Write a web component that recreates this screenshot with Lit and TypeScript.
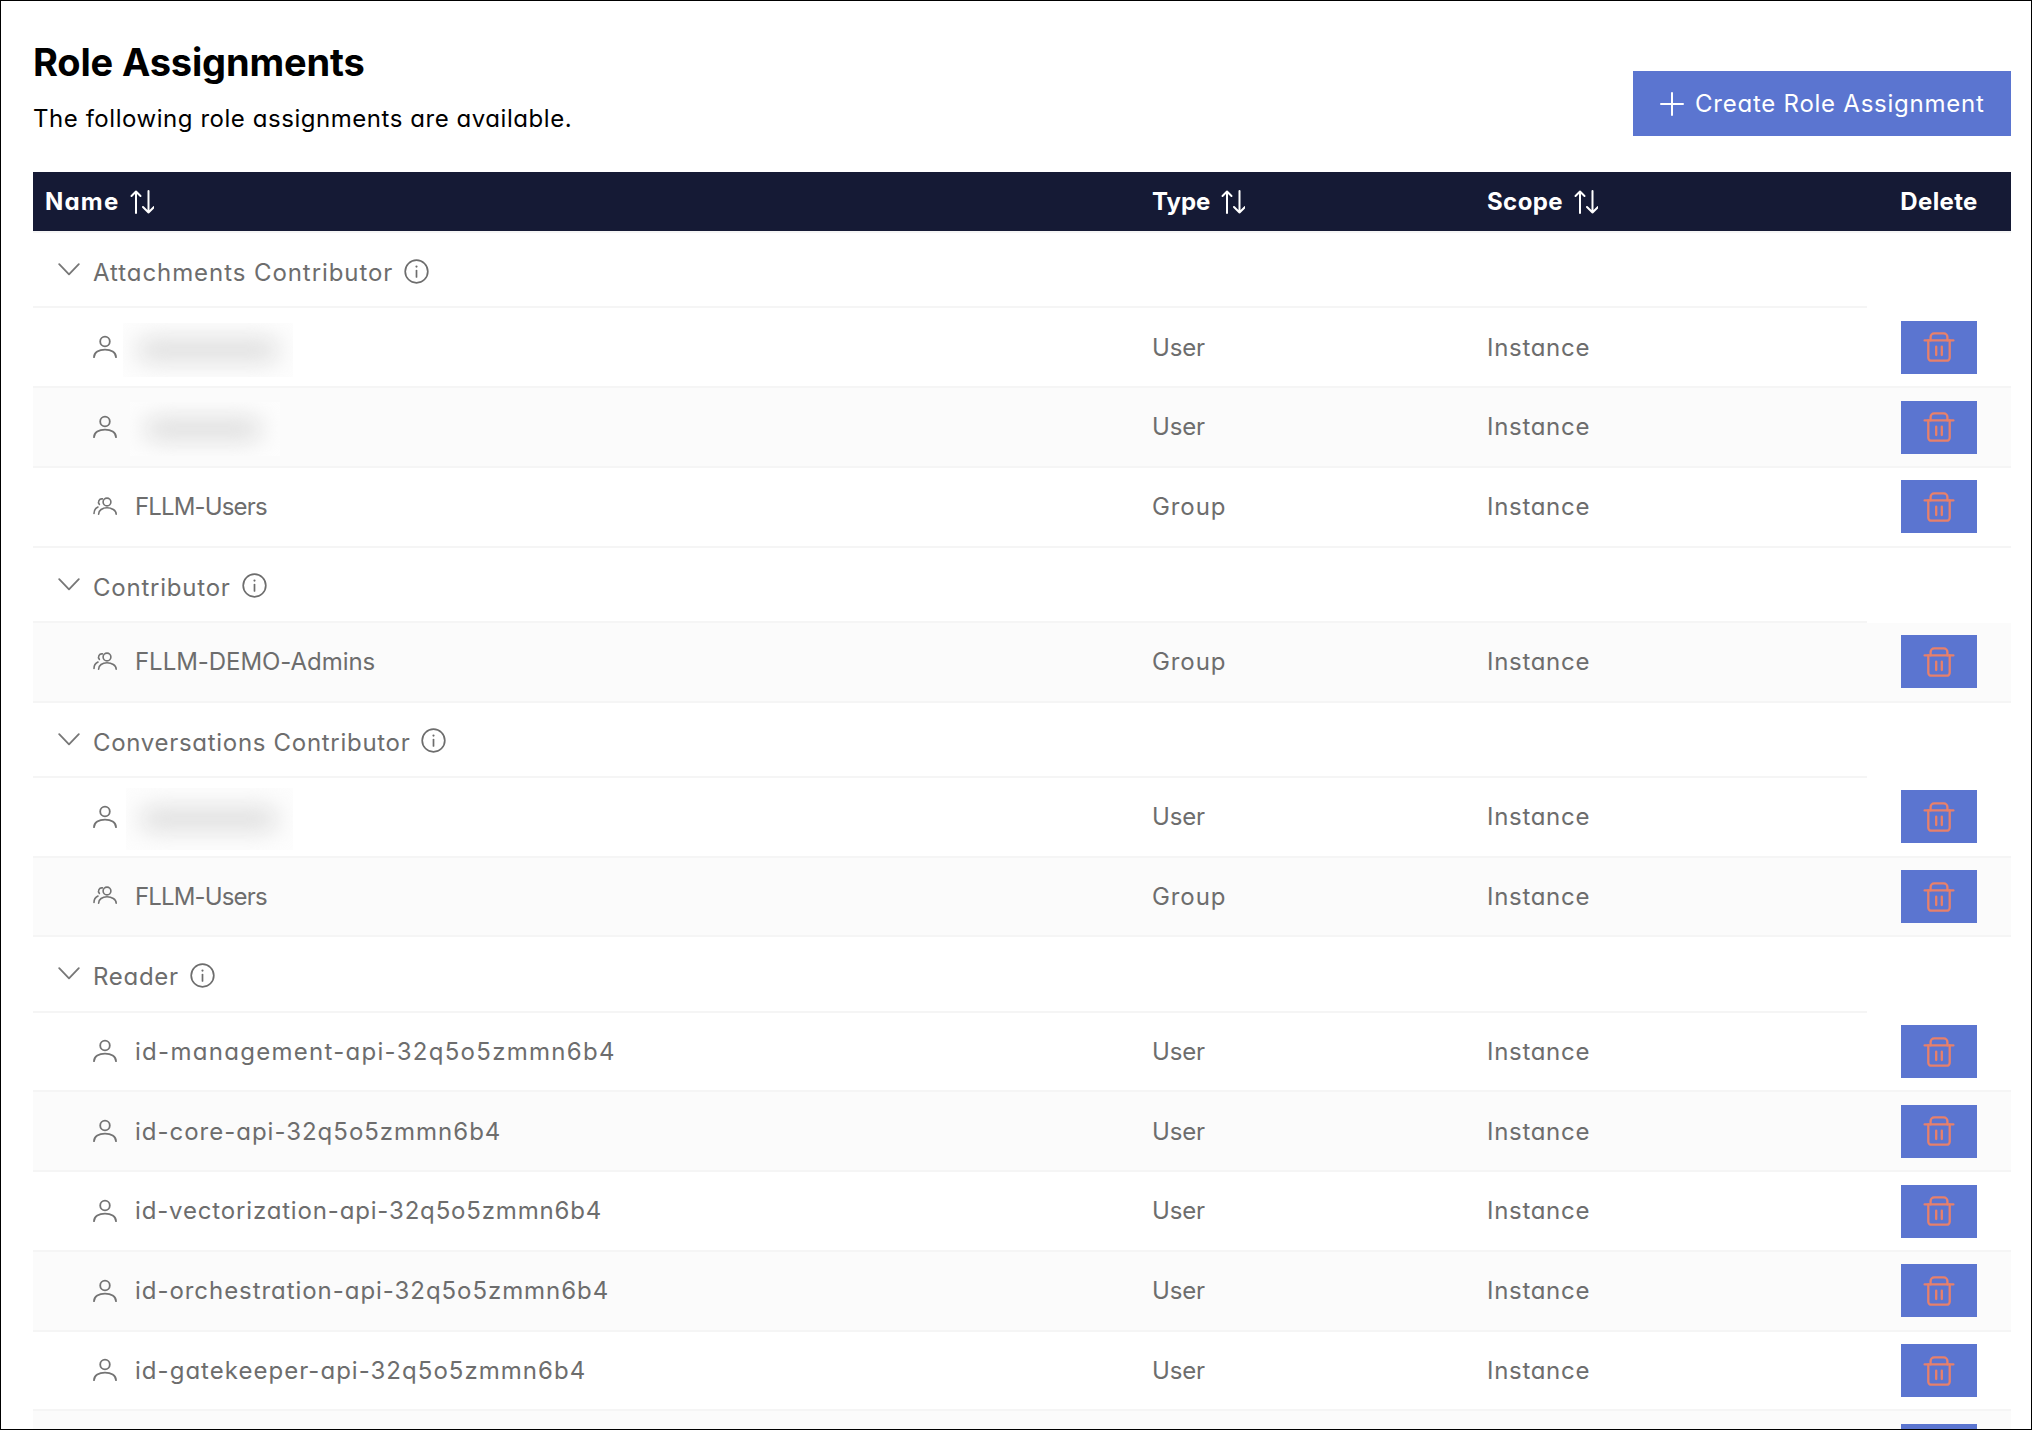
import { LitElement, html, css, svg } from "lit";
import { customElement } from "lit/decorators.js";
import { styleMap } from "lit/directives/style-map.js";

type Row = { name?: string; ls?: number; redact?: string; kind?: "user" | "group"; type?: string };
type Group = { title: string; ls: number; rows: Row[] };

const U = (name: string, ls: number): Row => ({ name, ls, kind: "user", type: "User" });
const G = (name: string, ls: number): Row => ({ name, ls, kind: "group", type: "Group" });
const R = (redact: string): Row => ({ redact, kind: "user", type: "User" });

const GROUPS: Group[] = [
  { title: "Attachments Contributor", ls: 0.93, rows: [R("r1"), R("r2"), G("FLLM-Users", -0.85)] },
  { title: "Contributor", ls: 0.78, rows: [G("FLLM-DEMO-Admins", -0.05)] },
  { title: "Conversations Contributor", ls: 0.7, rows: [R("r3"), G("FLLM-Users", -0.85)] },
  {
    title: "Reader",
    ls: 0.7,
    rows: [
      U("id-management-api-32q5o5zmmn6b4", 1.29),
      U("id-core-api-32q5o5zmmn6b4", 0.99),
      U("id-vectorization-api-32q5o5zmmn6b4", 0.84),
      U("id-orchestration-api-32q5o5zmmn6b4", 0.95),
      U("id-gatekeeper-api-32q5o5zmmn6b4", 1.03),
      {},
    ],
  },
];

const TYPE_LS: Record<string, number> = { User: -0.2, Group: 0.9 };
const sp = (ls?: number) => styleMap({ letterSpacing: `${ls ?? 0}px` });

const sortIcon = html`<svg class="sort" viewBox="0 0 24 24" fill="none" stroke="currentColor" stroke-width="2" stroke-linecap="round" stroke-linejoin="round">
  <path d="M6 23V1.5M1.5 6 6 1.5 10.5 6" />
  <path d="M18.5 1V22.5M13 17l5.5 5.5L24 17" />
</svg>`;

const chevron = html`<svg class="chev" viewBox="0 0 22 13" fill="none" stroke="currentColor" stroke-width="1.8" stroke-linecap="round" stroke-linejoin="round">
  <path d="M1.2 1.2 11 11.4 20.8 1.2" />
</svg>`;

const info = html`<svg class="info" viewBox="0 0 25 25" fill="none" stroke="currentColor" stroke-width="1.7" stroke-linecap="round">
  <circle cx="12.5" cy="12.5" r="11.3" />
  <path d="M12.5 11.5V18" />
  <circle cx="12.5" cy="7.6" r="0.5" fill="currentColor" stroke-width="1.2" />
</svg>`;

const person = html`<svg class="who" viewBox="0 0 24 24" fill="none" stroke="currentColor" stroke-width="1.8" stroke-linecap="round">
  <circle cx="12" cy="6.5" r="4.8" />
  <path d="M1 22.2C1 17.4 6 14.6 12 14.6S23 17.4 23 22.2" />
</svg>`;

const people = html`<svg class="who" viewBox="0 0 24 24" fill="none" stroke="currentColor" stroke-width="1.6" stroke-linecap="round">
  <circle cx="14" cy="7" r="3.9" />
  <path d="M5.6 19.2C5.6 15.2 9.4 12.8 14 12.8S23.2 15.2 23.2 19.2" />
  <path d="M9.4 3.9A3.3 3.3 0 0 0 6.4 9.4" />
  <path d="M1 18.4C1 15.2 2.4 13.2 5 12" />
</svg>`;

const trash = svg`<svg class="trash" viewBox="0 0 32 32" fill="none" stroke="currentColor" stroke-width="2.3" stroke-linecap="round" stroke-linejoin="round">
  <path d="M1.6 9.4H30.4" />
  <path d="M5.3 9.4V26.7a3 3 0 0 0 3 3H23.7a3 3 0 0 0 3-3V9.4" />
  <path d="M7.6 9.4V6a3.6 3.6 0 0 1 3.6-3.6H20.8A3.6 3.6 0 0 1 24.4 6V9.4" />
  <path d="M13.2 15.6V24M18.8 15.6V24" />
</svg>`;

@customElement("app-root")
export class AppRoot extends LitElement {
  static styles = css`
    :host {
      display: block;
      box-sizing: border-box;
      height: 1430px;
      overflow: hidden;
      border: 1px solid #000;
      padding: 0 20px 0 32px;
      background: #fff;
      font-family: Inter, "Noto Sans", sans-serif;
      font-feature-settings: "cv11" 1, "ss03" 1;
      color: #6d6d6d;
      font-size: 24px;
    }
    .top {
      display: flex;
      justify-content: space-between;
      align-items: flex-end;
      height: 171px;
      padding-bottom: 36px;
      box-sizing: border-box;
    }
    h1 {
      margin: 0 0 17px;
      font-size: 38px;
      line-height: 50px;
      font-weight: 700;
      color: #000;
      letter-spacing: -0.16px;
    }
    .sub {
      margin: 0 0 2px;
      line-height: 30px;
      color: #000;
      font-size: 24px;
      letter-spacing: 0.55px;
      font-weight: 400;
    }
    .create {
      display: flex;
      align-items: center;
      gap: 11px;
      height: 65px;
      width: 378px;
      box-sizing: border-box;
      padding-left: 27px;
      background: #5b75d0;
      color: #fff;
      border: 0;
      font: inherit;
      font-feature-settings: inherit;
      font-size: 24px;
      font-weight: 400;
      letter-spacing: 0.76px;
    }
    .create svg {
      width: 24px;
      height: 24px;
      flex: none;
    }
    .row,
    .head {
      display: grid;
      grid-template-columns: 1107px 335px 392px 144px;
      align-items: center;
    }
    .head {
      height: 61px;
      box-sizing: border-box;
      border-bottom: 2px solid #f5f5f5;
      background: #151a35;
      background-clip: padding-box;
      color: #fff;
      font-weight: 700;
    }
    .hc {
      display: flex;
      align-items: center;
      padding-left: 12px;
      gap: 11px;
    }
    .hc.del {
      padding: 0;
      justify-content: center;
    }
    .sort {
      width: 24px;
      height: 24px;
      flex: none;
    }
    .group {
      height: 75.25px;
    }
    .gt {
      box-sizing: border-box;
      width: 1834px;
      height: 100%;
      display: flex;
      align-items: center;
      padding-left: 25px;
      border-bottom: 2px solid #f5f5f5;
    }
    .gt span {
      margin-top: 6px;
    }
    .chev {
      width: 22px;
      height: 13px;
      flex: none;
      margin-right: 13px;
      color: #777;
    }
    .info {
      width: 25px;
      height: 25px;
      flex: none;
      margin-left: 11px;
      margin-top: 3px;
    }
    .row {
      height: 79.75px;
      box-sizing: border-box;
      border-bottom: 2px solid #f5f5f5;
    }
    .row.alt {
      background: #fbfbfb;
    }
    .cell {
      padding-left: 12px;
    }
    .inst {
      letter-spacing: 0.7px;
    }
    .name {
      display: flex;
      align-items: center;
      padding-left: 60px;
      gap: 18px;
    }
    .who {
      width: 24px;
      height: 24px;
      flex: none;
      color: #737373;
    }
    .redact {
      flex: none;
      height: 54px;
      margin-top: 5px;
      background: #fdfdfd;
      overflow: hidden;
      display: flex;
      align-items: center;
    }
    .redact i {
      display: block;
      height: 22px;
      background: #dcdcdc;
      filter: blur(12px);
      border-radius: 11px;
      margin-left: 14px;
    }
    .r1 {
      width: 170px;
      margin-left: -12px;
    }
    .r1 i {
      width: 142px;
    }
    .r2 {
      width: 150px;
      margin-left: -5px;
    }
    .r2 i {
      width: 118px;
    }
    .r3 {
      width: 167px;
      margin-left: -9px;
      height: 62px;
    }
    .r3 i {
      width: 138px;
    }
    .del-cell {
      display: flex;
      justify-content: center;
    }
    .del-btn {
      width: 76px;
      height: 53px;
      margin-top: 0.6px;
      border: 0;
      padding: 0;
      background: #5b75d0;
      color: #e8806a;
      display: flex;
      align-items: center;
      justify-content: center;
    }
    .trash {
      width: 32px;
      height: 32px;
    }
  `;

  private renderRow(r: Row, i: number) {
    return html`<div class="row ${i % 2 ? "alt" : ""}">
      <div class="name">
        ${r.kind === "group" ? people : r.kind === "user" ? person : ""}
        ${r.redact ? html`<div class="redact ${r.redact}"><i></i></div>` : html`<span style=${sp(r.ls)}>${r.name ?? ""}</span>`}
      </div>
      <div class="cell" style=${sp(TYPE_LS[r.type ?? ""])}>${r.type ?? ""}</div>
      <div class="cell inst">${r.kind ? "Instance" : ""}</div>
      <div class="del-cell"><button class="del-btn" aria-label="Delete">${trash}</button></div>
    </div>`;
  }

  render() {
    let idx = 0;
    return html`
      <div class="top">
        <div>
          <h1>Role Assignments</h1>
          <p class="sub">The following role assignments are available.</p>
        </div>
        <button class="create">
          <svg viewBox="0 0 24 24" fill="none" stroke="currentColor" stroke-width="2" stroke-linecap="round"><path d="M12 1V23M1 12H23" /></svg>
          Create Role Assignment
        </button>
      </div>
      <div class="head">
        <div class="hc"><span style=${sp(1.2)}>Name</span>${sortIcon}</div>
        <div class="hc"><span style=${sp(0)}>Type</span>${sortIcon}</div>
        <div class="hc"><span style=${sp(0.4)}>Scope</span>${sortIcon}</div>
        <div class="hc del"><span style=${sp(0.35)}>Delete</span></div>
      </div>
      ${GROUPS.map(
        (g) => html`
          <div class="group">
            <div class="gt">${chevron}<span style=${sp(g.ls)}>${g.title}</span>${info}</div>
          </div>
          ${g.rows.map((r) => this.renderRow(r, idx++))}
        `
      )}
    `;
  }
}
